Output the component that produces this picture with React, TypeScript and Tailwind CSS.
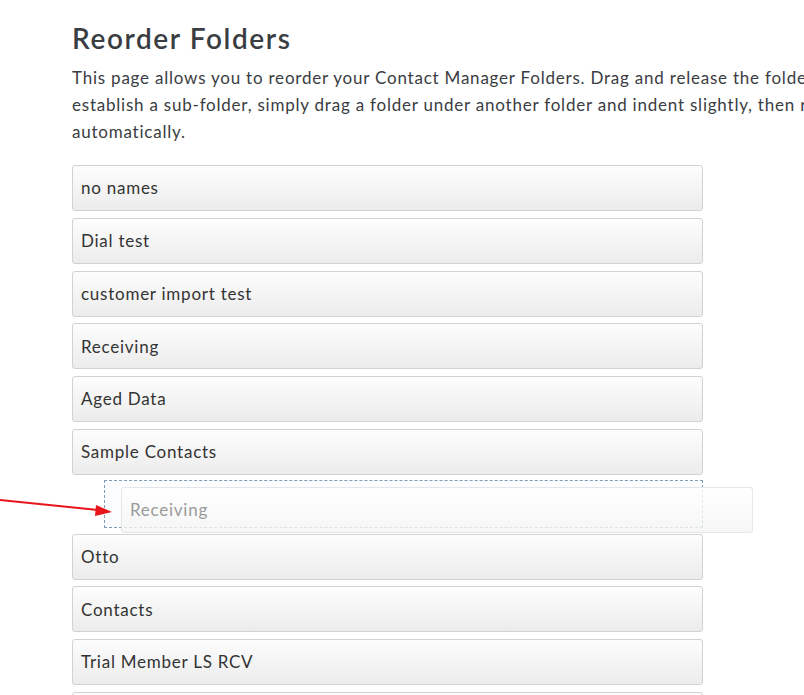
import React from "react";

const folders = [
  "no names",
  "Dial test",
  "customer import test",
  "Receiving",
  "Aged Data",
  "Sample Contacts",
];

const foldersAfter = ["Otto", "Contacts", "Trial Member LS RCV", ""];

function FolderRow({ name }: { name: string }) {
  return (
    <li className="mb-[6.75px] flex h-[46px] w-[631px] items-center rounded-[3px] border border-[#d2d2d2] bg-gradient-to-b from-[#fdfdfd] to-[#ececec] pl-[8px] text-[17px] tracking-[0.75px] text-[#333]">
      {name}
    </li>
  );
}

export default function App() {
  return (
    <div
      className="relative h-[695px] w-[804px] overflow-hidden bg-white"
      style={{ fontFamily: "Lato, 'Open Sans', sans-serif" }}
    >
      <div className="pl-[72px] pt-[20px]">
        <h1 className="text-[28px] font-semibold leading-[36px] tracking-[1.6px] text-[#3a3d42]">Reorder Folders</h1>
        <p className="mt-[8px] whitespace-nowrap text-[17px] leading-[27px] tracking-[0.78px] text-[#3a3d42]">
          This page allows you to reorder your Contact Manager Folders. Drag and release the folders to the order of your choosing. To
          <br />
          establish a sub-folder, simply drag a folder under another folder and indent slightly, then release. Changes are saved
          <br />
          automatically.
        </p>

        <ul className="mt-[20px]">
          {folders.map((f) => (
            <FolderRow key={f} name={f} />
          ))}
          {/* drop placeholder */}
          <li className="mb-[6px] ml-[32px] mt-[-2px] h-[48px] w-[599px] border border-dashed border-[#7f9bb5] bg-[#fbfdff]" />
          {foldersAfter.map((f, i) => (
            <FolderRow key={i} name={f} />
          ))}
        </ul>
      </div>

      {/* item being dragged */}
      <div className="absolute left-[121px] top-[487px] flex h-[46px] w-[632px] items-center rounded-[3px] border border-[#e6e6e6] bg-gradient-to-b from-[#ffffff]/80 to-[#f4f4f4]/80 pl-[8px] text-[17px] tracking-[0.75px] text-[#9a9a9a]">
        Receiving
      </div>

      {/* red arrow */}
      <svg className="absolute left-0 top-[495px]" width="120" height="25" viewBox="0 0 120 25">
        <line x1="0" y1="5" x2="98" y2="15" stroke="#e8141c" strokeWidth="2" />
        <polygon points="112,17 96,10 95,21" fill="#e8141c" />
      </svg>
    </div>
  );
}
